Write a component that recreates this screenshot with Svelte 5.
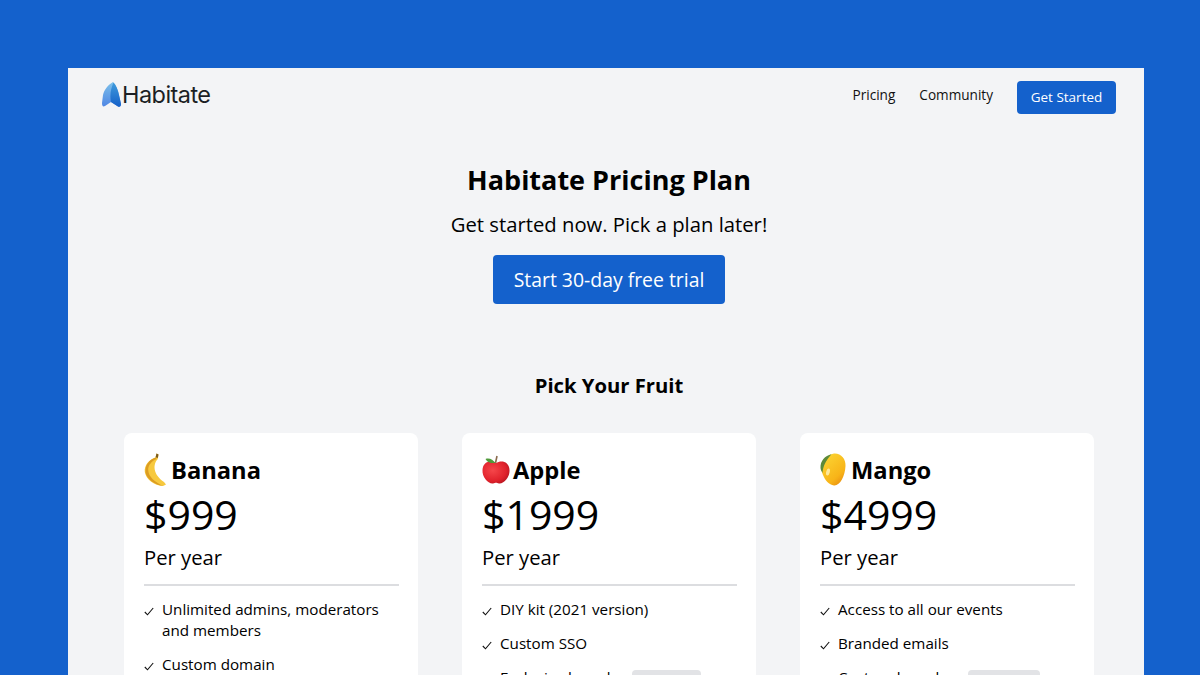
<script>
  const plans = [
    {
      name: 'Banana',
      fruit: 'banana',
      price: '$999',
      features: [
        { text: 'Unlimited admins, moderators and members' },
        { text: 'Custom domain' },
      ],
    },
    {
      name: 'Apple',
      fruit: 'apple',
      price: '$1999',
      features: [
        { text: 'DIY kit (2021 version)' },
        { text: 'Custom SSO' },
        { text: 'Exclusive brands', badge: 'Soon', badgeGap: 10, badgeWidth: 69 },
      ],
    },
    {
      name: 'Mango',
      fruit: 'mango',
      price: '$4999',
      features: [
        { text: 'Access to all our events' },
        { text: 'Branded emails' },
        { text: 'Custom brands', badge: 'Soon', badgeGap: 18, badgeWidth: 72 },
      ],
    },
  ];
</script>

<div class="page">
  <div class="panel">
    <header class="nav">
      <div class="brand">
        <svg class="logo" width="19" height="25" viewBox="0 0 19 25">
          <defs>
            <linearGradient id="lg1" x1="0" y1="0" x2="0" y2="1">
              <stop offset="0" stop-color="#7cc0ea" />
              <stop offset="1" stop-color="#4f86e4" />
            </linearGradient>
            <linearGradient id="lg2" x1="0" y1="0" x2="0" y2="1">
              <stop offset="0" stop-color="#3f9bdc" />
              <stop offset="1" stop-color="#1560c8" />
            </linearGradient>
          </defs>
          <path d="M11 0 C6 3 2 8 1 13 L0 21 C0 24 1 25 3 24 L9 20 L16 24.5 C18 25.5 19 24 19 22 L17 13 C16 8 14 3 11 0 Z" fill="url(#lg1)" />
          <path d="M11.5 0.5 C9 6 7.5 13 9 20 L16 24.5 C18 25.5 19 24 19 22 L17 13 C16 8 14 3 11.5 0.5 Z" fill="url(#lg2)" />
        </svg>
        <span class="wordmark">Habitate</span>
      </div>
      <nav class="links">
        <span>Pricing</span>
        <span>Community</span>
        <button class="cta-small">Get Started</button>
      </nav>
    </header>

    <section class="hero">
      <h1>Habitate Pricing Plan</h1>
      <p>Get started now. Pick a plan later!</p>
      <button class="cta">Start 30-day free trial</button>
    </section>

    <h2>Pick Your Fruit</h2>

    <div class="cards">
      {#each plans as plan}
        <article class="card">
          <h3 class={plan.fruit}>
            {#if plan.fruit === 'banana'}
              <svg class="fruit" width="22" height="33" viewBox="0 0 22 33">
                <path d="M12.5 0.5 L14.5 1.5 L13.8 6 C9 11 8.5 21 20 29 L22 31.5 L19 33 C9 32 2 26 0.8 19 C0 12 5 7 11.5 4.5 Z" fill="#f7c93e" />
                <path d="M11.5 4.5 C5 7 1 12 1.5 19.5 C3 26 10 31.5 19 33 C11 29 4.5 24 4.2 17 C4 12 8 8 12.5 6 Z" fill="#dc9d22" />
                <path d="M12.5 0.5 L14.5 1.5 L13.8 5 L11.6 4.2 Z" fill="#7a5a1e" />
              </svg>
            {:else if plan.fruit === 'apple'}
              <svg class="fruit" width="28" height="29" viewBox="0 0 28 29">
                <defs>
                  <radialGradient id="ap" cx="0.38" cy="0.4" r="0.7">
                    <stop offset="0" stop-color="#f5464a" />
                    <stop offset="0.7" stop-color="#e0212b" />
                    <stop offset="1" stop-color="#b3141f" />
                  </radialGradient>
                </defs>
                <path d="M14 8 C19 5 27 6 27.5 15 C28 22 22 29 17 28.5 C15.5 28.3 15 27.8 14 27.8 C13 27.8 12.5 28.3 11 28.5 C6 29 0 22 0.5 15 C1 6 9 5 14 8 Z" fill="url(#ap)" />
                <path d="M13.5 8 L15 1" stroke="#8a6a4c" stroke-width="1.6" fill="none" />
                <path d="M3.5 4 C7 2.5 11 4.5 13.5 8 C9 8.5 5.5 7.5 3.5 4 Z" fill="#4f9a3a" />
              </svg>
            {:else}
              <svg class="fruit" width="26" height="33" viewBox="0 0 26 33">
                <defs>
                  <linearGradient id="mg" x1="0.2" y1="0.1" x2="0.8" y2="1">
                    <stop offset="0" stop-color="#fbd130" />
                    <stop offset="0.7" stop-color="#f8b418" />
                    <stop offset="1" stop-color="#e88d10" />
                  </linearGradient>
                </defs>
                <path d="M14 0.5 C21 0 26 6 25.5 13 C25 23 20 33 14 32.5 C9 32 5 27 3 22 C0 15 4 2 14 0.5 Z" fill="url(#mg)" />
                <path d="M11.5 1.2 C5 2.5 0 8 0.5 15 C0.8 17 1.5 18.5 2.5 20 C3 13 6 7 11.5 1.2 Z" fill="#5c8a3a" />
                <ellipse cx="8" cy="19" rx="1.8" ry="3.5" fill="#fde89a" transform="rotate(15 8 19)" />
              </svg>
            {/if}
            <span>{plan.name}</span>
          </h3>
          <div class="price">{plan.price}</div>
          <div class="period">Per year</div>
          <hr />
          <ul>
            {#each plan.features as feature}
              <li>
                <svg class="check" width="10" height="9" viewBox="0 0 10 9">
                  <path d="M0.8 5 L3.5 7.8 L9.2 1" stroke="#111" stroke-width="1.1" fill="none" />
                </svg>
                <span class="feature">
                  {feature.text}
                  {#if feature.badge}<span class="badge" style="margin-left: {feature.badgeGap}px; width: {feature.badgeWidth}px">{feature.badge}</span>{/if}
                </span>
              </li>
            {/each}
          </ul>
        </article>
      {/each}
    </div>
  </div>
</div>

<style>
  :global(body) {
    margin: 0;
    background: #1461cc;
    font-family: 'Open Sans', sans-serif;
    color: #000;
  }

  .page {
    height: 675px;
    overflow: hidden;
    box-sizing: border-box;
    padding: 68px 56px 0 68px;
  }

  .panel {
    background: #f3f4f6;
    height: 640px;
    box-sizing: border-box;
    padding: 13px 28px 0 34px;
  }

  .nav {
    display: flex;
    justify-content: space-between;
    align-items: flex-start;
    height: 33px;
  }

  .brand {
    display: flex;
    align-items: center;
    gap: 1px;
    height: 27px;
  }

  .wordmark {
    font-family: Inter, sans-serif;
    font-size: 23.5px;
    letter-spacing: -0.55px;
    color: #1c1f24;
  }

  .links {
    display: flex;
    align-items: center;
    gap: 24px;
    font-size: 13.6px;
    color: #111;
  }

  .links span {
    position: relative;
    top: -3px;
  }

  .cta-small {
    background: #1461cc;
    color: #fff;
    border: none;
    border-radius: 4px;
    font: inherit;
    font-size: 13.5px;
    width: 99px;
    height: 33px;
    padding: 0 0 2px;
  }

  .hero {
    text-align: center;
  }

  h1 {
    margin: 47px 0 0;
    font-size: 27px;
    line-height: 37px;
    font-weight: 700;
  }

  .hero p {
    margin: 12px 0 0;
    font-size: 20.25px;
    line-height: 28px;
  }

  .cta {
    margin-top: 17px;
    width: 232px;
    height: 49px;
    padding: 0;
    background: #1461cc;
    color: #fff;
    border: none;
    border-radius: 4px;
    font: inherit;
    font-size: 19.4px;
  }

  h2 {
    margin: 66px 0 0;
    text-align: center;
    font-size: 20.25px;
    line-height: 30px;
    font-weight: 700;
  }

  .cards {
    display: grid;
    grid-template-columns: repeat(3, 294px);
    gap: 44px;
    margin: 33px 0 0 22px;
  }

  .card {
    background: #fff;
    border-radius: 8px;
    padding: 20px 19px 20px 20px;
    height: 300px;
    box-sizing: border-box;
  }

  h3 {
    display: flex;
    align-items: center;
    gap: 5px;
    margin: 0;
    height: 33px;
    font-size: 23.7px;
    font-weight: 700;
  }

  h3.apple {
    gap: 3px;
  }

  .fruit {
    flex: none;
  }

  .price {
    font-size: 41px;
    line-height: 54px;
    margin-top: 1px;
  }

  .period {
    font-size: 20.25px;
    line-height: 28px;
    margin-top: 2px;
  }

  hr {
    border: none;
    height: 2px;
    background: #dcdde0;
    margin: 13px 0 13px;
  }

  ul {
    list-style: none;
    margin: 0;
    padding: 0;
  }

  li {
    display: flex;
    align-items: flex-start;
    gap: 8px;
    font-size: 15.2px;
    line-height: 21px;
    margin-bottom: 13px;
  }

  .check {
    flex: none;
    margin-top: 8px;
  }

  .feature {
    flex: 1;
  }

  .badge {
    display: inline-block;
    vertical-align: top;
    margin-top: 3px;
    background: #e2e3e6;
    border-radius: 4px;
    font-size: 12px;
    line-height: 22px;
    text-align: center;
  }
</style>
